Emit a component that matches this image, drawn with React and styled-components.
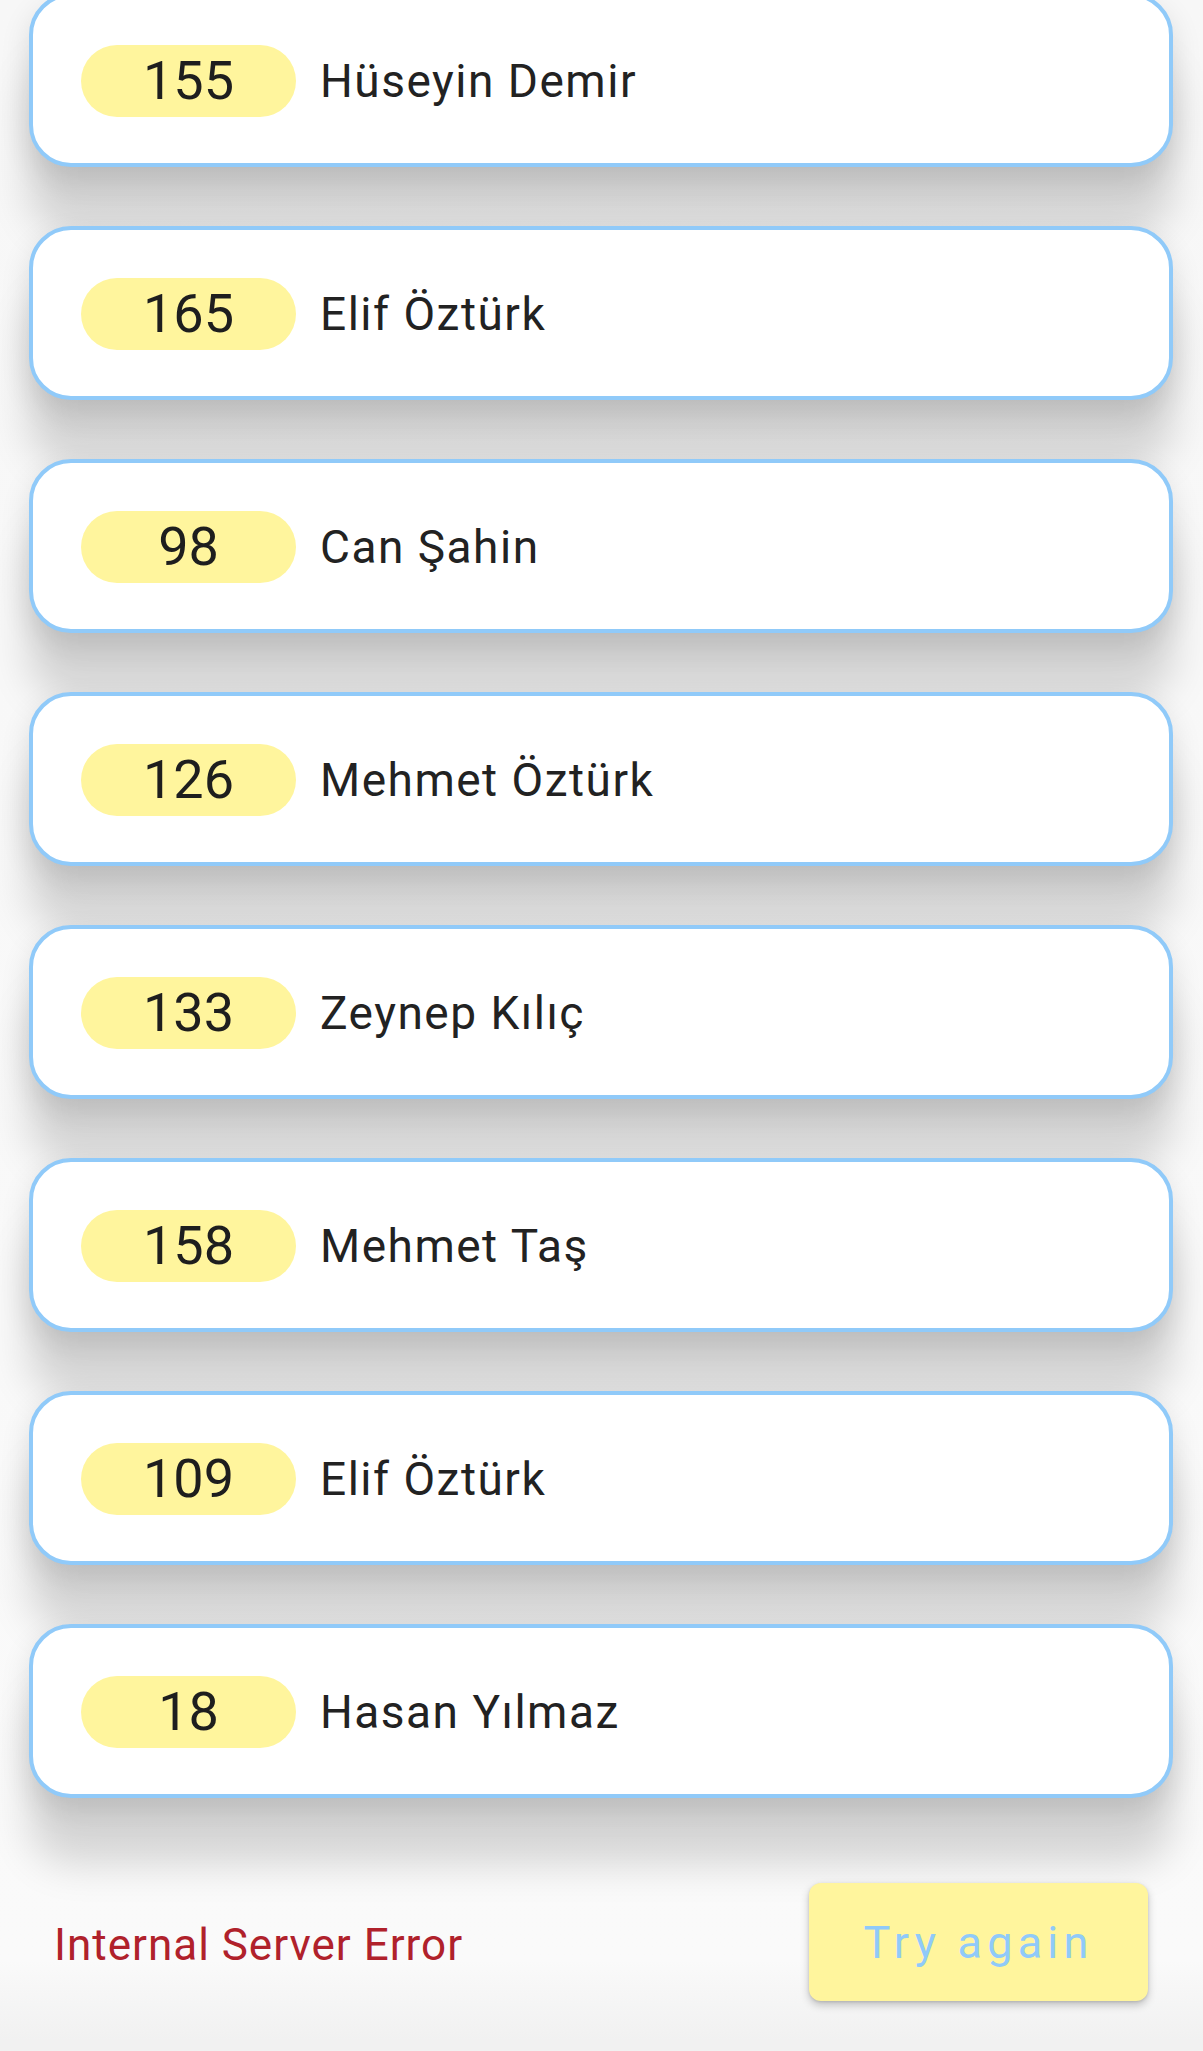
import styled, { createGlobalStyle } from "styled-components";

const GlobalStyle = createGlobalStyle`
  html, body {
    margin: 0;
    padding: 0;
    background: #f7f7f7;
    font-family: Roboto, "Noto Sans", "Liberation Sans", sans-serif;
  }
`;

const Screen = styled.div`
  width: 1203px;
  height: 2051px;
  overflow: hidden;
  background: linear-gradient(to bottom, #f7f7f7 0, #fafafa 1960px, #f1f1f1 2040px);
`;

const List = styled.ul`
  list-style: none;
  margin: -7px 0 0;
  padding: 0 30px 0 29px;
  display: flex;
  flex-direction: column;
  gap: 59px;
`;

const Card = styled.li`
  box-sizing: border-box;
  height: 174px;
  display: flex;
  align-items: center;
  gap: 24px;
  padding: 2px 0 0 48px;
  background: #fff;
  border: 4px solid #90caf9;
  border-radius: 42px;
  box-shadow: 0 66px 40px rgba(0, 0, 0, 0.15), 0 12px 30px rgba(0, 0, 0, 0.12);
`;

const Badge = styled.span`
  width: 215px;
  height: 72px;
  border-radius: 36px;
  background: #fff59d;
  display: flex;
  align-items: center;
  justify-content: center;
  color: #1e1e1e;
  font-size: 54px;
  line-height: 1;
`;

const Name = styled.span`
  color: #222;
  font-size: 46px;
  letter-spacing: 1.5px;
  line-height: 1;
`;

const Footer = styled.div`
  display: flex;
  align-items: center;
  justify-content: space-between;
  margin-top: 85px;
  padding: 0 55px 0 54px;
`;

const ErrorText = styled.span`
  color: #b0212b;
  font-size: 44px;
  letter-spacing: 1px;
  line-height: 1;
  margin-top: 6px;
`;

const RetryButton = styled.button`
  width: 339px;
  height: 118px;
  border: none;
  border-radius: 12px;
  background: #fff59d;
  color: #90caf9;
  font-family: Roboto, "Noto Sans", sans-serif;
  font-size: 45px;
  letter-spacing: 5.2px;
  box-shadow: 0 4px 8px rgba(0, 0, 0, 0.22), 0 1px 3px rgba(0, 0, 0, 0.12);
  cursor: pointer;
`;

const people = [
  { score: 155, name: "Hüseyin Demir" },
  { score: 165, name: "Elif Öztürk" },
  { score: 98, name: "Can Şahin" },
  { score: 126, name: "Mehmet Öztürk" },
  { score: 133, name: "Zeynep Kılıç" },
  { score: 158, name: "Mehmet Taş" },
  { score: 109, name: "Elif Öztürk" },
  { score: 18, name: "Hasan Yılmaz" },
];

const App = () => {
  return (
    <Screen>
      <GlobalStyle />
      <List>
        {people.map((p, index) => (
          <Card key={`row-${index}`}>
            <Badge>{p.score}</Badge>
            <Name>{p.name}</Name>
          </Card>
        ))}
      </List>
      <Footer>
        <ErrorText>Internal Server Error</ErrorText>
        <RetryButton>Try again</RetryButton>
      </Footer>
    </Screen>
  );
};

export default App;
